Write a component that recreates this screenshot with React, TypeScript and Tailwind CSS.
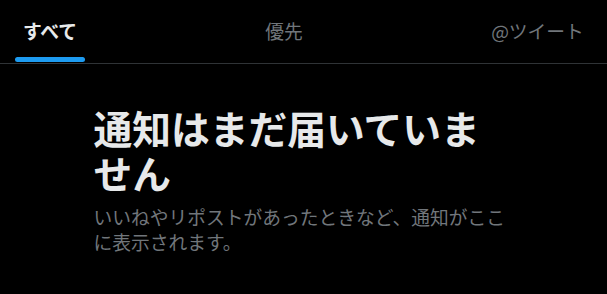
export default function App() {
  const font = { fontFamily: '"Noto Sans CJK JP", "Noto Sans", sans-serif' };
  return (
    <div className="w-[607px] h-[294px] bg-black overflow-hidden" style={font}>
      <div className="flex h-[63px] border-b border-[#2f3336] box-content">
        <div className="relative flex items-center justify-center w-[100px] px-[22px]">
          <span className="text-[18.75px] font-bold text-[#e7e9ea] leading-none">すべて</span>
          <div className="absolute bottom-[1px] left-[15px] w-[70px] h-[5px] rounded-full bg-[#1d9bf0]" />
        </div>
        <div className="flex-1 flex items-center justify-center">
          <span className="text-[18.75px] text-[#71767b] leading-none">優先</span>
        </div>
        <div className="flex items-center justify-center w-[139px]">
          <span className="text-[18.75px] text-[#71767b] leading-none">@ツイート</span>
        </div>
      </div>
      <div className="w-[420px] mx-auto mt-[41px]">
        <h1 className="text-[38.75px] leading-[45px] font-bold text-[#e7e9ea]">
          通知はまだ届いていません
        </h1>
        <p className="mt-[9px] text-[18.75px] leading-[25px] text-[#71767b]">
          いいねやリポストがあったときなど、通知がここに表示されます。
        </p>
      </div>
    </div>
  );
}
